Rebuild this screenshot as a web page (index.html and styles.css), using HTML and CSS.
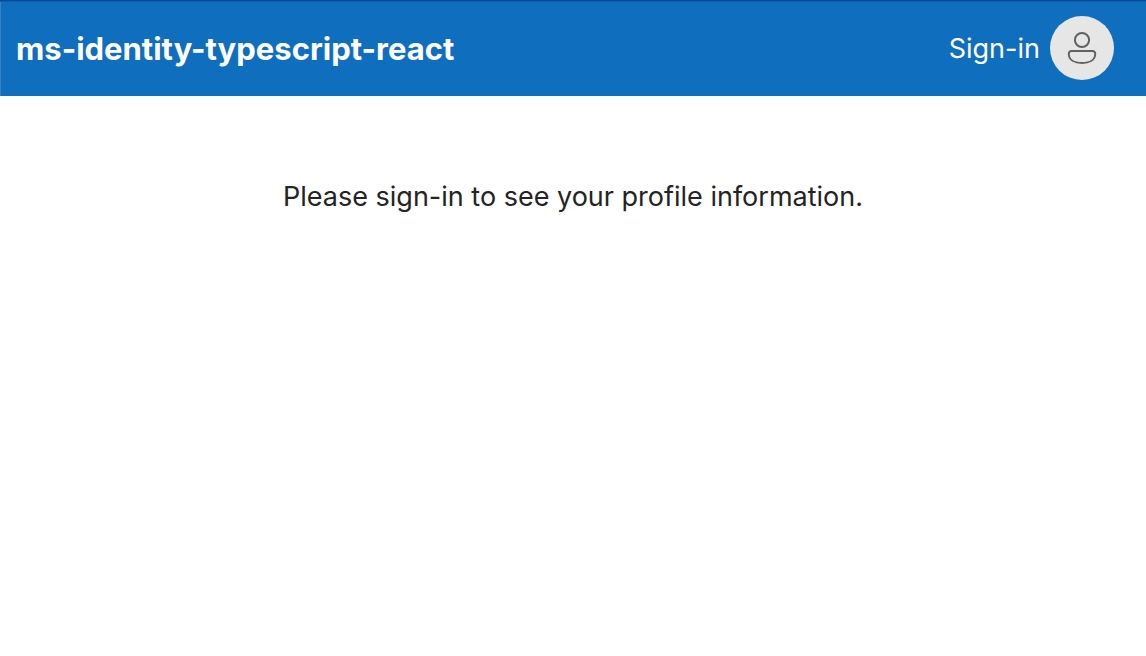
FILE: index.html
```html
<!DOCTYPE html>
<html lang="en">
<head>
<meta charset="utf-8">
<meta name="viewport" content="width=device-width, initial-scale=1">
<title>ms-identity-typescript-react</title>
<link rel="stylesheet" href="styles.css">
</head>
<body>
<header class="navbar">
  <a class="brand" href="#">ms-identity-typescript-react</a>
  <button class="sign-in" type="button">
    <span class="sign-in-label">Sign-in</span>
    <span class="avatar">
      <svg class="avatar-icon" viewBox="0 0 64 64" aria-hidden="true">
        <circle cx="32" cy="24" r="7.1"/>
        <path d="M21.500 34.900H42.500A2.800 2.800 0 0 1 45.200 38C45.200 44 39.500 47 32 47S18.800 44 18.800 38A2.800 2.800 0 0 1 21.500 34.900Z"/>
      </svg>
    </span>
  </button>
</header>
<main class="content">
  <p class="message">Please sign-in to see your profile information.</p>
</main>
</body>
</html>
```
FILE: styles.css
```css
body {
  margin: 0;
  background: #fff;
  color: #242424;
  font-family: Inter, "Liberation Sans", sans-serif;
}

.navbar {
  display: flex;
  align-items: center;
  justify-content: space-between;
  box-sizing: border-box;
  min-height: 96px;
  padding: 0 32px 0 16px;
  background: #106ebe;
  box-shadow: inset 0 1px #004a98, inset 0 2px #0a60ac, inset 1px 0 #3a80c6;
}

.brand {
  padding-top: 2px;
  color: #fff;
  font-size: 31px;
  font-weight: 700;
  line-height: 40px;
  text-decoration: none;
}

.sign-in {
  display: flex;
  align-items: center;
  gap: 10px;
  padding: 0;
  border: 0;
  background: none;
  color: #fff;
  font: inherit;
  font-size: 27px;
  line-height: 40px;
  cursor: pointer;
}

.sign-in-label {
  padding-top: 2px;
}

.avatar {
  width: 64px;
  height: 64px;
  border-radius: 50%;
  background: #e6e6e6;
}

.avatar-icon {
  display: block;
  width: 100%;
  height: 100%;
  fill: none;
  stroke: #616161;
  stroke-width: 2;
}

.content {
  padding: 80px 16px;
}

.message {
  margin: 0;
  font-size: 27px;
  line-height: 42px;
  text-align: center;
}
```
